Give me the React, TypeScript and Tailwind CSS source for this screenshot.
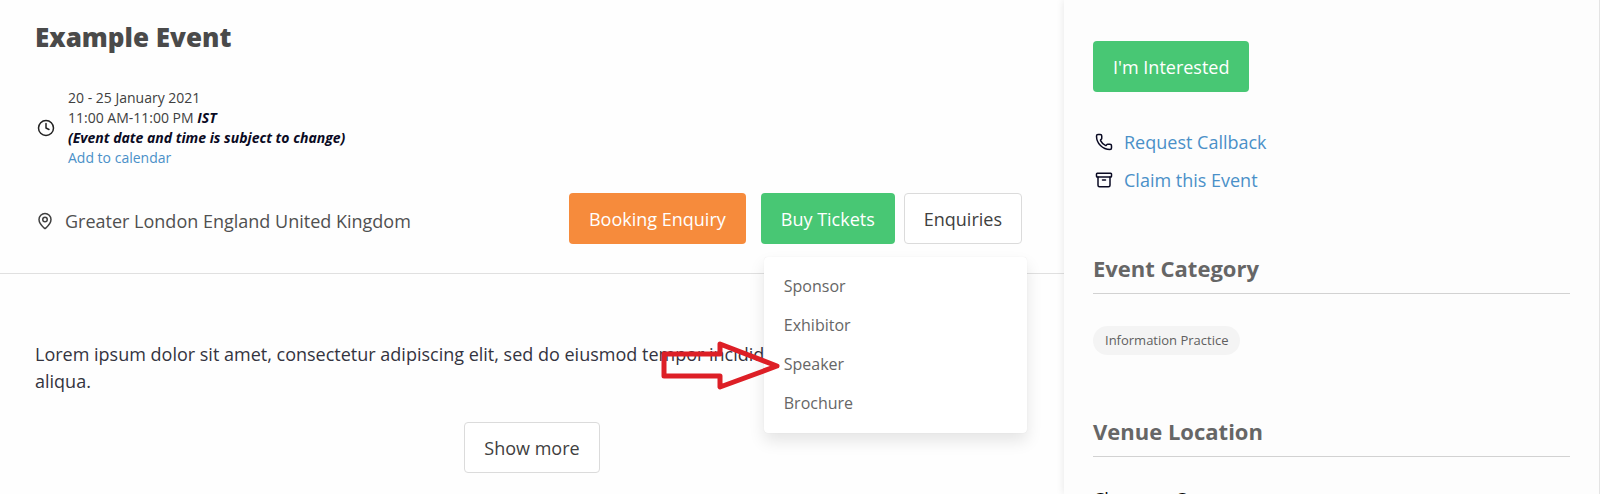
import { Archive, Clock, MapPin, Phone } from "lucide-react";

const tickets = ["Sponsor", "Exhibitor", "Speaker", "Brochure"];

const button = "h-[51px] shrink-0 rounded px-5 text-[18px] leading-6";
const outlineButton = "h-[51px] shrink-0 rounded border border-[#dbdbdb] bg-white px-[19px] text-[18px] leading-6";

function Arrow() {
  return (
    <svg
      className="absolute right-[247px] top-[83px] h-[50px] w-[120px]"
      viewBox="0 0 120 50"
      fill="none"
      stroke="#dd1f26"
      strokeWidth="5"
      strokeLinejoin="round"
    >
      <path d="M4 14H60V4L117 26L60 47V36H4Z" />
    </svg>
  );
}

function BuyTickets() {
  return (
    <div className="relative ml-[15px]">
      <button className={`${button} bg-[#48c774] text-white`}>Buy Tickets</button>
      <div className="absolute left-[3px] top-16 z-10 w-[263px] rounded bg-white py-[10px] shadow-[0_8px_16px_rgba(10,10,10,0.1),0_0_1px_rgba(10,10,10,0.1)]">
        {tickets.map((item) => (
          <a key={item} href="#" className="block px-5 py-2 text-[16px] leading-[23px] text-[#666]">
            {item}
          </a>
        ))}
        <Arrow />
      </div>
    </div>
  );
}

function SideHeading({ children }: { children: string }) {
  return (
    <h2 className="border-b border-[#d2d2d2] pb-[10px] text-[22px] font-bold leading-[30px] text-[#666]">
      {children}
    </h2>
  );
}

export default function App() {
  return (
    <div className="flex h-screen overflow-hidden bg-[#fefefe] font-['Open_Sans',sans-serif] text-[#404040]">
      <main className="min-w-0 flex-1">
        <section className="border-b border-[#e0e0e0] px-[35px] pb-[29px] pt-[19px]">
          <h1 className="text-[26px] font-extrabold leading-9 text-[#4a4a4a]">Example Event</h1>
          <div className="mt-[33px] flex items-center gap-[13px] pl-[2px]">
            <Clock size={18} strokeWidth={2} className="text-[#222]" />
            <div className="text-[14px] leading-5">
              <p>20 - 25 January 2021</p>
              <p>
                11:00 AM-11:00 PM <em className="font-bold text-[#0a0a23]">IST</em>
              </p>
              <p className="font-bold italic text-[#0a0a23]">(Event date and time is subject to change)</p>
              <a href="#" className="text-[#4a90c8]">Add to calendar</a>
            </div>
          </div>
          <div className="mt-[25px] flex items-center pr-[7px]">
            <div className="flex min-w-0 flex-1 items-center gap-[11px] pl-[1px] pt-1">
              <MapPin size={18} strokeWidth={2} />
              <span className="text-[18px] leading-6 text-[#505050]">Greater London England United Kingdom</span>
            </div>
            <button className={`${button} bg-[#f68b3c] text-white`}>Booking Enquiry</button>
            <BuyTickets />
            <button className={`${outlineButton} ml-[9px]`}>Enquiries</button>
          </div>
        </section>
        <section className="px-[35px] pt-[67px]">
          <p className="text-[18px] leading-[27px] text-[#34343f]">
            Lorem ipsum dolor sit amet, consectetur adipiscing elit, sed do eiusmod tempor incididunt ut labore et dolore magna aliqua.
          </p>
          <div className="mt-[27px] flex justify-center">
            <button className={outlineButton}>Show more</button>
          </div>
        </section>
      </main>
      <aside className="w-[536px] shrink-0 border-r border-[#e4e4e4] bg-[#fdfdfd] px-[29px] pt-[41px] shadow-[0_0_8px_rgba(10,10,10,0.1)]">
        <button className={`${button} bg-[#48c774] text-white`}>I'm Interested</button>
        <ul className="mt-[35px] space-y-2 text-[18px] leading-[30px] text-[#4a90c8]">
          <li className="flex items-center gap-[11px] pl-[2px]">
            <Phone size={18} strokeWidth={2} className="text-[#0a0a23]" />
            <a href="#">Request Callback</a>
          </li>
          <li className="flex items-center gap-[11px] pl-[2px]">
            <Archive size={18} strokeWidth={2} className="text-[#0a0a23]" />
            <a href="#">Claim this Event</a>
          </li>
        </ul>
        <div className="mt-[58px]">
          <SideHeading>Event Category</SideHeading>
          <div className="mt-8 flex">
            <span className="rounded-full bg-[#f4f4f4] px-3 text-[13px] leading-[29px] text-[#5f5f5f]">
              Information Practice
            </span>
          </div>
        </div>
        <div className="mt-[61px]">
          <SideHeading>Venue Location</SideHeading>
          <p className="mt-[30px] text-[18px] leading-6 text-[#0a0a0a]">Choose a C</p>
        </div>
      </aside>
    </div>
  );
}
